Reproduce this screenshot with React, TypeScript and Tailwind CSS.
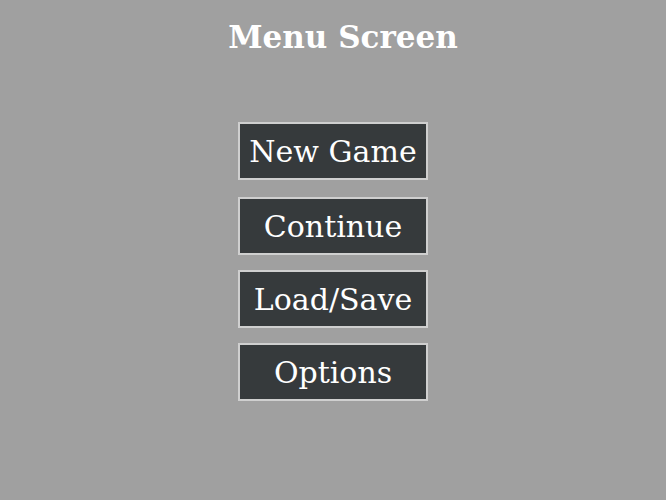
const items = ['New Game', 'Continue', 'Load/Save', 'Options'];

export default function App() {
  return (
    <div
      className="flex h-[500px] w-full flex-col items-center bg-[#a0a0a0]"
      style={{ fontFamily: '"DejaVu Serif", serif' }}
    >
      <h1 className="mt-[16px] pl-[20px] text-[31px] font-bold leading-[42px] text-white">
        Menu Screen
      </h1>
      <div className="mt-[64px] flex flex-col items-center gap-[15px]">
        {items.map((label, i) => (
          <button
            key={label}
            className={`flex h-[58px] w-[190px] items-center justify-center border-2 border-[#cfcfcf] bg-[#363a3c] pt-[2px] text-[30px] leading-none text-white ${
              i === 0 ? 'mb-[2px]' : ''
            }`}
          >
            {label}
          </button>
        ))}
      </div>
    </div>
  );
}
